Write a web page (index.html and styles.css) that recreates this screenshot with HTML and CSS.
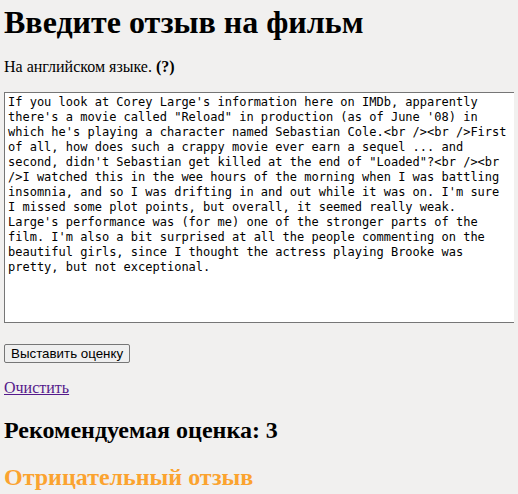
FILE: index.html
```html
<!DOCTYPE html>
<html>
<head>
<meta charset="utf-8">
<link rel="stylesheet" href="styles.css">
</head>
<body>
<h1 class="title">Введите отзыв на фильм</h1>
<p class="hint">На английском языке. <b>(?)</b></p>
<textarea class="review">If you look at Corey Large's information here on IMDb, apparently there's a movie called "Reload" in production (as of June '08) in which he's playing a character named Sebastian Cole.&lt;br /&gt;&lt;br /&gt;First of all, how does such a crappy movie ever earn a sequel ... and second, didn't Sebastian get killed at the end of "Loaded"?&lt;br /&gt;&lt;br /&gt;I watched this in the wee hours of the morning when I was battling insomnia, and so I was drifting in and out while it was on. I'm sure I missed some plot points, but overall, it seemed really weak. Large's performance was (for me) one of the stronger parts of the film. I'm also a bit surprised at all the people commenting on the beautiful girls, since I thought the actress playing Brooke was pretty, but not exceptional.</textarea>
<div class="actions"><button class="submit">Выставить оценку</button></div>
<p class="clear"><a href="#" class="clear-link">Очистить</a></p>
<h2 class="score">Рекомендуемая оценка: 3</h2>
<h2 class="verdict">Отрицательный отзыв</h2>
</body>
</html>
```
FILE: styles.css
```css
html { background: #f1f0ef; }
body {
  margin: 4px;
  font-family: "Liberation Serif", serif;
  font-size: 16px;
  color: #000;
  overflow: hidden;
}
.title {
  font-size: 32px;
  margin: 0 0 17px;
  line-height: 37px;
}
.hint { margin: 0 0 16px; }
.review {
  display: block;
  box-sizing: border-box;
  width: 512px;
  height: 231px;
  margin: 0;
  padding: 2px 3px;
  font-family: "DejaVu Sans Mono", monospace;
  font-size: 12px;
  line-height: 15px;
  border: 1px solid #767676;
  background: #fff;
  color: #000;
  resize: none;
}
.actions { margin-top: 21px; }
.submit {
  font-family: "Liberation Sans", sans-serif;
  font-size: 13.33px;
  padding: 1px 6px;
  border: 1px solid #767676;
  border-radius: 2px;
  background: #efefef;
  color: #000;
}
.clear { margin: 16px 0; }
.clear-link { color: #551a8b; }
.score { font-size: 24px; margin: 20px 0; }
.verdict { font-size: 24px; margin: 20px 0; color: #fba32f; }
```
